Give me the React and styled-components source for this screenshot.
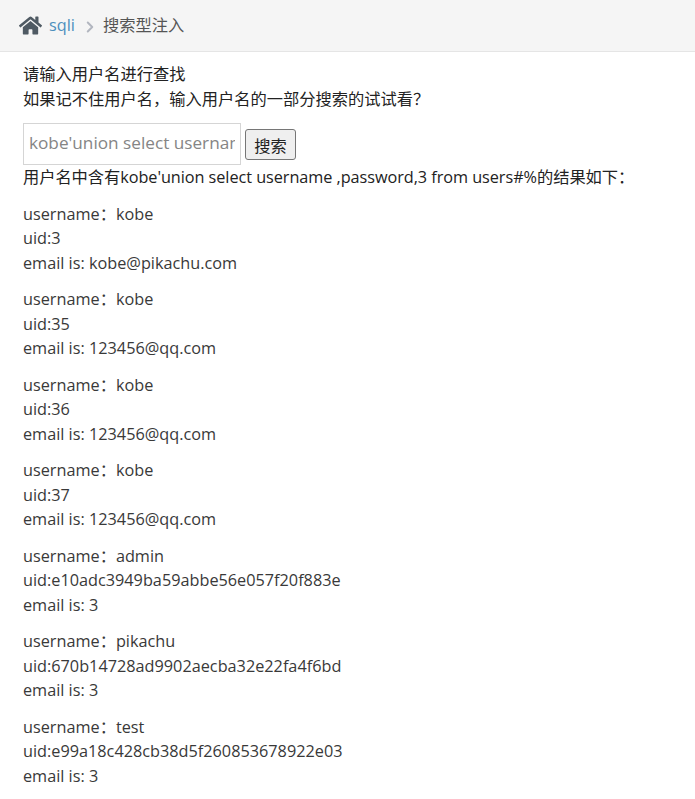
import styled, { createGlobalStyle } from 'styled-components';
import { FaHome } from 'react-icons/fa';
import { LuChevronRight } from 'react-icons/lu';

const Global = createGlobalStyle`
  html, body {
    margin: 0;
    background: #fff;
  }
  body {
    font-family: "Open Sans", "Noto Sans CJK SC", sans-serif;
    font-size: 16.25px;
    line-height: 24.5px;
    color: #393939;
  }
`;

const Breadcrumbs = styled.div`
  height: 52px;
  box-sizing: border-box;
  background: #f5f5f5;
  border-bottom: 1px solid #e5e5e5;
  display: flex;
  align-items: center;
  padding-left: 19px;
`;

const Home = styled(FaHome)`
  width: 23px;
  height: 21px;
  color: #4f5a63;
  margin-right: 7px;
`;

const Crumb = styled.a`
  color: #4c8fbd;
`;

const Sep = styled(LuChevronRight)`
  width: 18px;
  height: 18px;
  stroke-width: 2.6;
  color: #b2b6bf;
  margin: 2px 4px 0 6px;
`;

const Current = styled.span`
  color: #555;
`;

const Content = styled.div`
  padding: 10px 23px 0;
`;

const Intro = styled.span`
  display: block;
  color: #222;
`;

const Form = styled.form`
  display: flex;
  align-items: flex-end;
  gap: 4px;
  margin-top: 12px;
`;

const Input = styled.input`
  width: 218px;
  height: 42px;
  box-sizing: border-box;
  border: 1px solid #d5d5d5;
  padding: 0 5px 3px;
  font: 17.2px "Open Sans", "Noto Sans CJK SC", sans-serif;
  color: #858585;
  outline: none;
`;

const Button = styled.button`
  height: 31px;
  width: 51px;
  margin-bottom: 5px;
  padding: 0;
  box-sizing: border-box;
  border: 1px solid #767676;
  border-radius: 3px;
  background: #efefef;
  color: #222;
  font: 16.25px "Open Sans", "Noto Sans CJK SC", sans-serif;
`;

const Summary = styled.p`
  margin: 0 0 12.7px;
  line-height: 24px;
  color: #222;
  letter-spacing: -0.05px;
`;

const Result = styled.p`
  margin: 0 0 12px;
`;

const Line = styled.span`
  display: block;
`;

const rows = [
  ['kobe', '3', 'kobe@pikachu.com'],
  ['kobe', '35', '123456@qq.com'],
  ['kobe', '36', '123456@qq.com'],
  ['kobe', '37', '123456@qq.com'],
  ['admin', 'e10adc3949ba59abbe56e057f20f883e', '3'],
  ['pikachu', '670b14728ad9902aecba32e22fa4f6bd', '3'],
  ['test', 'e99a18c428cb38d5f260853678922e03', '3'],
];

const App = () => (
  <>
    <Global />
    <Breadcrumbs>
      <Home />
      <Crumb>sqli</Crumb>
      <Sep />
      <Current>搜索型注入</Current>
    </Breadcrumbs>
    <Content>
      <Intro>请输入用户名进行查找</Intro>
      <Intro>如果记不住用户名，输入用户名的一部分搜索的试试看？</Intro>
      <Form onSubmit={(e) => e.preventDefault()}>
        <Input defaultValue="kobe'union select username ,password,3 from users#" />
        <Button type="button">搜索</Button>
      </Form>
      <Summary>用户名中含有kobe'union select username ,password,3 from users#%的结果如下：</Summary>
      {rows.map(([name, uid, email], i) => (
        <Result key={i}>
          <Line>username：{name}</Line>
          <Line>uid:{uid}</Line>
          <Line>email is: {email}</Line>
        </Result>
      ))}
    </Content>
  </>
);

export default App;
